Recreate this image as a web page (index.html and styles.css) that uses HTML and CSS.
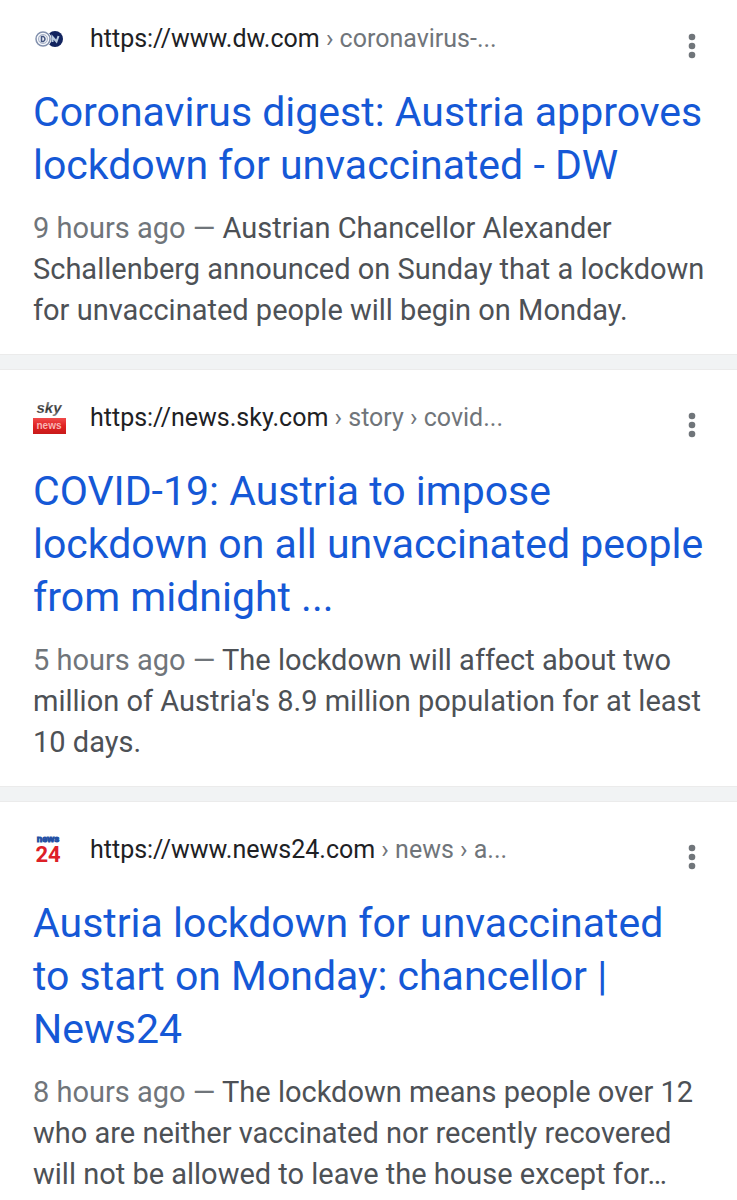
FILE: index.html
```html
<!DOCTYPE html>
<html lang="en">
<head>
<meta charset="utf-8">
<meta name="viewport" content="width=device-width, initial-scale=1">
<title>Search results</title>
<link rel="stylesheet" href="styles.css">
</head>
<body>
<main class="results">
  <article class="result">
    <header class="source">
      <svg class="favicon" viewBox="0 0 33 33" aria-hidden="true">
        <circle cx="22" cy="16" r="8" fill="#12245f"/>
        <circle cx="10" cy="16" r="7" fill="#e9edf4" stroke="#fff" stroke-width="3"/>
        <circle cx="10" cy="16" r="7" fill="none" stroke="#8290ad" stroke-width="1.5"/>
        <circle cx="10" cy="16" r="4.5" fill="none" stroke="#a9b3c8"/>
        <path d="M8.5 13.5v5h2q3-2.500 0-5z" fill="none" stroke="#44557f" stroke-width="1.5"/>
        <path d="M19.500 19v-5l4 4.500 2-5.500" fill="none" stroke="#b9cbe0" stroke-width="2"/>
      </svg>
      <p class="url">https://www.dw.com<span class="crumb"> › coronavirus-...</span></p>
      <button class="menu" type="button" aria-label="More options"><svg class="dots" viewBox="0 0 8 26"><circle cx="4" cy="4" r="3.300"/><circle cx="4" cy="13" r="3.300"/><circle cx="4" cy="22" r="3.300"/></svg></button>
    </header>
    <h3 class="title"><a class="link" href="#">Coronavirus digest: Austria approves lockdown for unvaccinated - DW</a></h3>
    <p class="snippet"><span class="age">9 hours ago — </span>Austrian Chancellor Alexander Schallenberg announced on Sunday that a lockdown for unvaccinated people will begin on Monday.</p>
  </article>
  <article class="result">
    <header class="source">
      <svg class="favicon" viewBox="0 0 33 33" aria-hidden="true">
        <defs><linearGradient id="sky-red" x1="0" y1="0" x2="0" y2="1"><stop offset="0" stop-color="#f04a4a"/><stop offset=".5" stop-color="#e02222"/><stop offset="1" stop-color="#c81a1a"/></linearGradient><linearGradient id="sky-metal" x1="0" y1="0" x2="0" y2="1"><stop offset="0" stop-color="#aaa"/><stop offset=".6" stop-color="#333"/><stop offset="1" stop-color="#888"/></linearGradient></defs>
        <text x="16" y="11" class="logo-sky" fill="url(#sky-metal)">sky</text>
        <rect y="16" width="33" height="16" fill="url(#sky-red)"/>
        <text x="16" y="27" class="logo-sky-news">news</text>
      </svg>
      <p class="url">https://news.sky.com<span class="crumb"> › story › covid...</span></p>
      <button class="menu" type="button" aria-label="More options"><svg class="dots" viewBox="0 0 8 26"><circle cx="4" cy="4" r="3.300"/><circle cx="4" cy="13" r="3.300"/><circle cx="4" cy="22" r="3.300"/></svg></button>
    </header>
    <h3 class="title"><a class="link" href="#">COVID-19: Austria to impose lockdown on all unvaccinated people from midnight ...</a></h3>
    <p class="snippet"><span class="age">5 hours ago — </span>The lockdown will affect about two million of Austria's 8.9 million population for at least 10 days.</p>
  </article>
  <article class="result">
    <header class="source">
      <svg class="favicon" viewBox="0 0 33 33" aria-hidden="true">
        <text x="15" y="8" class="logo-news">news</text>
        <text x="15" y="28" class="logo-24">24</text>
      </svg>
      <p class="url">https://www.news24.com<span class="crumb"> › news › a...</span></p>
      <button class="menu" type="button" aria-label="More options"><svg class="dots" viewBox="0 0 8 26"><circle cx="4" cy="4" r="3.300"/><circle cx="4" cy="13" r="3.300"/><circle cx="4" cy="22" r="3.300"/></svg></button>
    </header>
    <h3 class="title"><a class="link" href="#">Austria lockdown for unvaccinated to start on Monday: chancellor | News24</a></h3>
    <p class="snippet"><span class="age">8 hours ago — </span>The lockdown means people over 12 who are neither vaccinated nor recently recovered will not be allowed to leave the house except for…</p>
  </article>
</main>
</body>
</html>
```
FILE: styles.css
```css
* { box-sizing: border-box; }
body { margin: 0; background: #fff; font-family: Roboto, "Liberation Sans", sans-serif; color: #4d5156; }
.results { display: flex; flex-direction: column; gap: 14px; background: #f1f3f4; }
.result { background: #fff; padding: 26px 31px 23px 33px; border: solid #ebebeb; border-width: 1px 0; }
.result:first-child { padding-top: 17px; border-top: 0; }
.source { display: flex; align-items: flex-start; gap: 24px; height: 69px; }
.favicon { width: 33px; height: 33px; margin-top: 6px; flex: none; overflow: visible; }
.url { flex: 1; margin: 6px 0 0; font-size: 25px; line-height: 32px; color: #202124; white-space: nowrap; }
.crumb { color: #70757a; }
.menu { border: 0; background: none; padding: 16px 10px; display: flex; }
.dots { width: 8px; height: 26px; fill: #70757a; }
.title { margin: 0; font-size: 41px; line-height: 53px; font-weight: 400; }
.link { color: #1558d6; text-decoration: none; }
.snippet { margin: 16px 0 0; font-size: 29px; line-height: 41px; }
.age { color: #70757a; }
.logo-24 { font: 700 22px Roboto, sans-serif; fill: #dd2027; text-anchor: middle; }
.logo-news { font: 700 9px "Liberation Sans", sans-serif; fill: #2450a4; stroke: #2450a4; stroke-width: 1px; text-anchor: middle; }
.logo-sky { font: italic 700 15px "Liberation Sans", sans-serif; text-anchor: middle; }
.logo-sky-news { font: 700 10px "Liberation Sans", sans-serif; fill: #f8b4b4; text-anchor: middle; }
```
